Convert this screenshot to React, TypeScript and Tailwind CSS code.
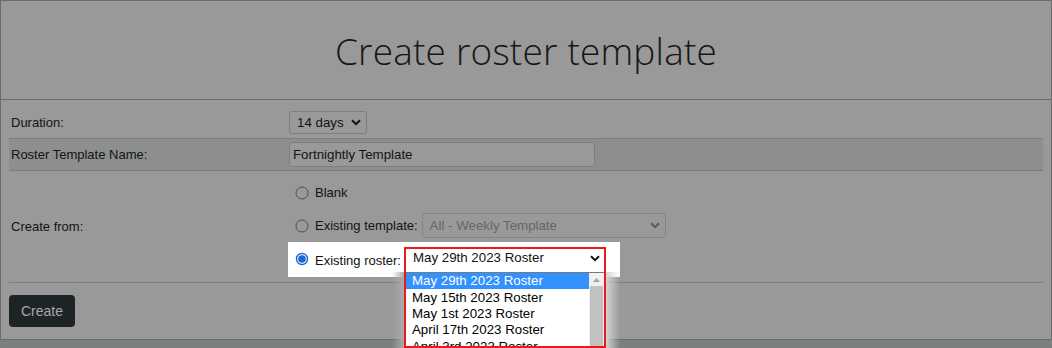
const arial = { fontFamily: '"Liberation Sans", Arial, sans-serif' };

function Chevron({ color = "#111" }: { color?: string }) {
  return (
    <svg width="10" height="7" viewBox="0 0 10 7" className="shrink-0">
      <path d="M1 1.2 L5 5.2 L9 1.2" fill="none" stroke={color} strokeWidth="2" />
    </svg>
  );
}

function Radio({ checked = false }: { checked?: boolean }) {
  return (
    <svg width="14" height="14" viewBox="0 0 14 14" className="shrink-0">
      {checked ? (
        <>
          <circle cx="7" cy="7" r="6.2" fill="#1a66d2" />
          <circle cx="7" cy="7" r="4.8" fill="#fff" />
          <circle cx="7" cy="7" r="3.8" fill="#1a66d2" />
        </>
      ) : (
        <circle cx="7" cy="7" r="6" fill="#999" stroke="#4d4d4d" strokeWidth="1" />
      )}
    </svg>
  );
}

const rosters = [
  "May 29th 2023 Roster",
  "May 15th 2023 Roster",
  "May 1st 2023 Roster",
  "April 17th 2023 Roster",
  "April 3rd 2023 Roster",
];

export default function App() {
  return (
    <div className="relative h-[348px] w-[1052px] overflow-hidden bg-[#7c8080]" style={arial}>
      <div className="h-[340px] border border-[#6b6b6b] bg-[#999999]">
        <div className="flex h-[99px] items-center justify-center border-b border-[#6b6b6b]">
          <h1
            className="pt-[2px] text-[37px] font-light tracking-[0.2px] text-[#161616]"
            style={{ fontFamily: '"Open Sans", sans-serif' }}
          >
            Create roster template
          </h1>
        </div>

        <div className="px-2 text-[13px] text-[#131313]">
          <div className="flex h-[38px] items-end pb-[4px]">
            <div className="flex h-[23px] w-[280px] items-center pl-[2px]">Duration:</div>
            <div className="flex h-[23px] w-[78px] items-center justify-between rounded-[3px] border border-[#7f7f7f] pl-[7px] pr-[5px] text-[13.3px]">
              <span>14 days</span>
              <Chevron />
            </div>
          </div>

          <div className="flex h-[33px] items-center border-y border-[#7e7e7e] bg-[#8d8f8f]">
            <div className="w-[280px] pl-[2px]">Roster Template Name:</div>
            <div className="flex h-[25px] w-[306px] items-center rounded-[3px] border border-[#7f7f7f] bg-[#999] pl-[3px] text-[13.3px]">
              Fortnightly Template
            </div>
          </div>

          <div className="flex border-b border-[#7e7e7e]">
            <div className="flex w-[279px] items-center pl-[2px]">Create from:</div>
            <div className="flex flex-col pb-[5px] pt-[11px]">
              <div className="flex h-[22px] items-center gap-[6px] pl-[7px]">
                <Radio />
                <span>Blank</span>
              </div>
              <div className="mt-[9px] flex h-[25px] items-center pl-[7px]">
                <Radio />
                <span className="ml-[6px]">Existing template:</span>
                <div className="ml-[4px] flex h-[25px] w-[244px] items-center justify-between rounded-[3px] border border-[#858585] pl-[7px] pr-[5px] text-[13.3px] text-[#666]">
                  <span>All - Weekly Template</span>
                  <Chevron color="#5a5a5a" />
                </div>
              </div>
              <div className="mt-[4px] flex h-[35px] w-[332px] items-start bg-white pl-[7px] pt-[5px] text-[#111]">
                <div className="mt-[5px]">
                  <Radio checked />
                </div>
                <span className="ml-[6px] mt-[4px]">Existing roster:</span>
                <div className="relative ml-[3px] h-[22px] w-[202px] text-[13.3px]">
                  <div className="flex h-[22px] items-center justify-between pl-[9px] pr-[6px]">
                    <span>May 29th 2023 Roster</span>
                    <Chevron />
                  </div>
                  <div className="absolute left-[-12px] top-[25px] h-[80px] w-[12px] bg-gradient-to-l from-[#aaaaaa] to-transparent" />
                  <div className="absolute right-[-14px] top-[25px] h-[80px] w-[14px] bg-gradient-to-r from-[#d4d4d4] to-transparent" />
                  <div className="absolute left-[1px] top-[25px] h-[80px] w-[200px] border border-[#7a7a7a] bg-white">
                    <div className="flex">
                      <div className="flex-1">
                        {rosters.map((r, i) => (
                          <div
                            key={r}
                            className={
                              i === 0
                                ? "flex h-[16.4px] items-center bg-[#3390ff] pl-[6px] text-white"
                                : "flex h-[16.4px] items-center pl-[6px] text-black"
                            }
                          >
                            {r}
                          </div>
                        ))}
                      </div>
                      <div className="flex h-[80px] w-[15px] flex-col bg-[#f0f0f0]">
                        <div className="flex h-[13px] items-center justify-center">
                          <svg width="7" height="4" viewBox="0 0 7 4">
                            <path d="M0 4 L3.5 0 L7 4 Z" fill="#a3a3a3" />
                          </svg>
                        </div>
                        <div className="mx-[1px] flex-1 bg-[#c1c1c1]" />
                      </div>
                    </div>
                  </div>
                  <div className="pointer-events-none absolute left-0 top-0 h-[101px] w-[202px] border-2 border-[#ea1a1a]" />
                </div>
              </div>
            </div>
          </div>

          <div className="pt-[12px]">
            <button className="h-[32px] w-[66px] rounded-[4px] bg-[#1e2326] text-[14px] text-[#a5a8aa]">
              Create
            </button>
          </div>
        </div>
      </div>
    </div>
  );
}
